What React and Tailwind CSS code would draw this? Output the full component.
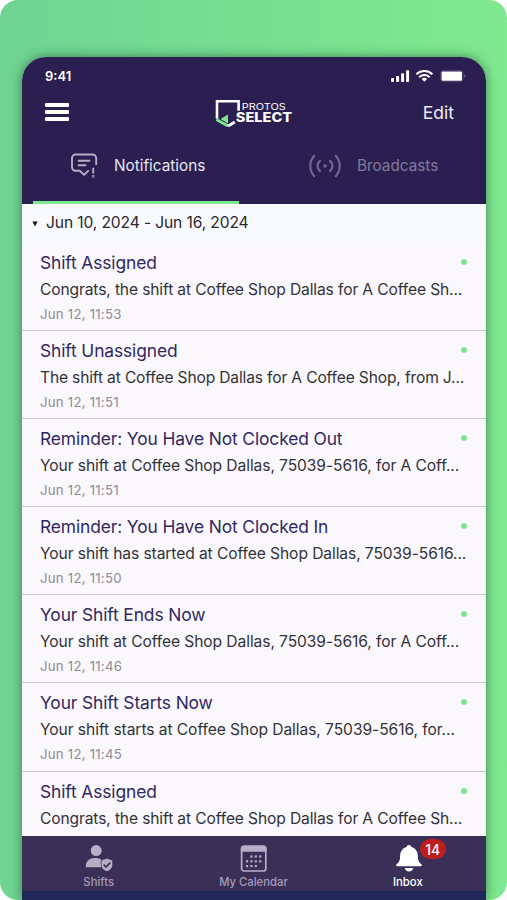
import React, { useState } from "react";

const NOTIFICATIONS = [
  { id: 1, title: "Shift Assigned", body: "Congrats, the shift at Coffee Shop Dallas for A Coffee Sh...", date: "Jun 12, 11:53", tracking: "tracking-[-0.13px]" },
  { id: 2, title: "Shift Unassigned", body: "The shift at Coffee Shop Dallas for A Coffee Shop, from J...", date: "Jun 12, 11:51", tracking: "tracking-[-0.16px]" },
  { id: 3, title: "Reminder: You Have Not Clocked Out", body: "Your shift at Coffee Shop Dallas, 75039-5616, for A Coff...", date: "Jun 12, 11:51", tracking: "tracking-[-0.09px]" },
  { id: 4, title: "Reminder: You Have Not Clocked In", body: "Your shift has started at Coffee Shop Dallas, 75039-5616...", date: "Jun 12, 11:50", tracking: "tracking-[-0.09px]" },
  { id: 5, title: "Your Shift Ends Now", body: "Your shift at Coffee Shop Dallas, 75039-5616, for A Coff...", date: "Jun 12, 11:46", tracking: "tracking-[-0.09px]" },
  { id: 6, title: "Your Shift Starts Now", body: "Your shift starts at Coffee Shop Dallas, 75039-5616, for...", date: "Jun 12, 11:45", tracking: "tracking-[-0.07px]" },
  { id: 7, title: "Shift Assigned", body: "Congrats, the shift at Coffee Shop Dallas for A Coffee Sh...", tracking: "tracking-[-0.13px]" },
];

function StatusBar() {
  return (
    <div className="flex h-[38px] items-center justify-between pl-[23px] pr-[20px]">
      <span className="text-[13px] font-semibold leading-none">9:41</span>
      <svg width="76" height="14" viewBox="0 0 76 14" fill="#fff">
        {/* Signal */}
        <rect x="1" y="9" width="3" height="4" rx="0.8" />
        <rect x="6.1" y="7" width="3" height="6" rx="0.8" />
        <rect x="11.1" y="4.3" width="3" height="8.7" rx="0.8" />
        <rect x="16.1" y="1.2" width="3" height="11.8" rx="0.8" />
        {/* Wifi */}
        <g fill="none" stroke="#fff" strokeWidth="2.1">
          <path d="M26.4 5.2a11.6 11.6 0 0 1 16 0" />
          <path d="M29.2 8.2a7.4 7.4 0 0 1 10.4 0" />
        </g>
        <path d="M34.4 12.8l-2.7-2.8a4.2 4.2 0 0 1 5.4 0z" />
        {/* Battery */}
        <rect x="50.600" y="1.3" width="22.600" height="11.4" rx="3" fill="none" stroke="#fff" strokeOpacity="0.2" strokeWidth="0.8" />
        <rect x="51.600" y="2.4" width="20.400" height="9.3" rx="1.2" />
        <path d="M74.5 5.3a2 2 0 0 1 0 3.4z" opacity="0.5" />
      </svg>
    </div>
  );
}

function Logo() {
  return (
    <svg width="78" height="30" viewBox="0 0 78 30" fill="none">
      <path d="M23.6 12.8V3.3H2v17.5" stroke="#fff" strokeWidth="2.6" />
      <path d="M13 16.6v8.8l-7.4-4.4z" fill="#7ee88f" />
      <path d="M1.4 21.6l11.6 6.4" stroke="#7ee88f" strokeWidth="2.8" />
      <path d="M13.2 28l6.6-4" stroke="#fff" strokeWidth="2.8" />
      <text x="26.8" y="11.8" fill="#fff" fontFamily="Inter, sans-serif" fontSize="9.2" textLength="44" lengthAdjust="spacingAndGlyphs">PROTOS</text>
      <text x="20.8" y="24" fill="#fff" fontFamily="Inter, sans-serif" fontSize="13" fontWeight="800" textLength="56.4" lengthAdjust="spacingAndGlyphs">SELECT</text>
    </svg>
  );
}

function MessageIcon() {
  return (
    <svg width="28" height="26" viewBox="0 0 28 26" fill="none" stroke="#b5aec6" strokeWidth="1.9" strokeLinecap="round" strokeLinejoin="round">
      <path d="M25.2 11.3V5.1A3.6 3.6 0 0 0 21.6 1.5H4.6A3.6 3.6 0 0 0 1 5.1v9.1a3.6 3.6 0 0 0 3.6 3.6h4.1l4.4 4.1 4.1-4.1" />
      <path d="M7.6 7.8h10.8M7.6 12.3h7M22.2 15.5v4.2" />
      <circle cx="22.2" cy="23.4" r="0.4" />
    </svg>
  );
}

function BroadcastIcon() {
  return (
    <svg width="32" height="24" viewBox="0 0 32 24" fill="none" stroke="#73698f" strokeWidth="2.1" strokeLinecap="round">
      <path d="M5.2 1.8c-5.2 6-5.2 14.4 0 20.4M26.8 1.8c5.2 6 5.2 14.4 0 20.4" />
      <path d="M11 6.9c-3.3 2.9-3.3 7.3 0 10.2M21 6.9c3.3 2.9 3.3 7.3 0 10.2" />
      <circle cx="16" cy="12" r="0.7" />
    </svg>
  );
}

function ShiftsIcon() {
  return (
    <svg width="28" height="28" viewBox="0 0 28 28" fill="#b5aec6">
      <circle cx="11.2" cy="6.6" r="5.5" />
      <path d="M.7 23.2c0-6.4 3.6-9.2 9.3-9.2 3 0 4.8.5 6.4 1.5-.9 1.4-1.2 4.2.2 7.7z" />
      <path d="M21.9 14.4l5.4 2v4.3c0 3.1-2 5.3-5.4 6.6-3.4-1.3-5.4-3.5-5.4-6.6v-4.3z" />
      <path d="M18.7 20.6l2.3 2.4 4.2-4.4" fill="none" stroke="#392f57" strokeWidth="1.7" />
    </svg>
  );
}

function CalendarIcon() {
  return (
    <svg width="28" height="28" viewBox="0 0 28 28" fill="#b5aec6">
      <rect x="2.6" y="2.4" width="24.2" height="24.6" rx="2.5" fill="none" stroke="#b5aec6" strokeWidth="1.7" />
      <path d="M1.8 7.8V4.6a3 3 0 0 1 3-3h19.800a3 3 0 0 1 3 3v3.200z" />
      {[12.4, 16.8, 21.2].map((x) => (
        <rect key={x} x={x - 1.1} y="11.4" width="2.2" height="2.2" />
      ))}
      {[8, 12.4, 16.8, 21.2].map((x) => (
        <rect key={x} x={x - 1.1} y="16.2" width="2.2" height="2.2" />
      ))}
      {[8, 12.4, 16.8].map((x) => (
        <rect key={x} x={x - 1.1} y="21" width="2.2" height="2.2" />
      ))}
    </svg>
  );
}

function BellIcon() {
  return (
    <svg width="28" height="28" viewBox="0 0 28 28" fill="#fff">
      <path d="M14 1c1.3 0 2.2.8 2.4 2 4.3 1.2 6.5 4.8 6.5 9.3 0 4.2 1 6 3.5 7.9.8.7.6 2.1-.7 2.1H2.3c-1.3 0-1.5-1.4-.7-2.1 2.5-1.9 3.5-3.7 3.5-7.9C5.1 7.8 7.3 4.2 11.6 3c.2-1.2 1.1-2 2.4-2z" />
      <path d="M9.8 24h8.4c-.3 2.2-1.9 3.5-4.2 3.5s-3.9-1.3-4.2-3.5z" />
    </svg>
  );
}

function NotificationRow({ item }) {
  return (
    <div className="h-[88.1px] shrink-0 border-b border-[#c9c6ce] pl-[18px] pr-[19px] pt-[8px]">
      <div className="flex items-center justify-between">
        <h2 className="text-[17.4px] leading-6 tracking-[-0.12px] text-[#322861]">{item.title}</h2>
        <span className="mb-[2px] h-[6px] w-[6px] rounded-full bg-[#7de58f]" />
      </div>
      <p className={`mt-[3px] whitespace-nowrap text-[15.6px] leading-6 text-[#333238] ${item.tracking}`}>{item.body}</p>
      {item.date && <p className="mt-[2px] text-[13.2px] leading-5 tracking-[0.24px] text-[#8d8b94]">{item.date}</p>}
    </div>
  );
}

export default function App() {
  const [tab, setTab] = useState("notifications");

  return (
    <div className="h-[900px] w-[507px] overflow-hidden bg-white font-['Inter',sans-serif]">
      <div className="h-full overflow-hidden rounded-[18px] bg-linear-to-r from-[#6fd492] to-[#80e98f] pl-[22px] pr-[21px] pt-[57px]">
        <div className="flex h-full flex-col overflow-hidden rounded-t-[24px] bg-[#faf8fd] shadow-[0_0_12px_rgba(20,70,40,0.6)]">
          {/* Header */}
          <header className="h-[147px] shrink-0 bg-[#2a1f50] text-white">
            <StatusBar />
            <div className="grid h-[36px] grid-cols-3 items-center pl-[23px] pr-[32px]">
              <button className="mb-[3px] flex w-6 flex-col gap-[3px]">
                <span className="h-[4px] w-6 rounded-[1px] bg-white" />
                <span className="h-[4px] w-6 rounded-[1px] bg-white" />
                <span className="h-[4px] w-6 rounded-[1px] bg-white" />
              </button>
              <div className="flex justify-center pl-[9px]">
                <Logo />
              </div>
              <button className="pt-px text-right text-[17.5px] text-[#efedf5]">Edit</button>
            </div>
            <div className="flex h-[73px] pl-[11px] pr-[11px]">
              <button
                onClick={() => setTab("notifications")}
                className={`flex w-[206px] items-center gap-[15px] pl-[38px] ${tab === "notifications" ? "border-b-[3px] border-[#7ee88f]" : ""}`}
              >
                <MessageIcon />
                <span className="text-[15.3px] text-[#e8e5f0]">Notifications</span>
              </button>
              <button
                onClick={() => setTab("broadcasts")}
                className="flex flex-1 items-center gap-[16px] pb-[3px] pl-[70px]"
              >
                <BroadcastIcon />
                <span className="text-[15.3px] text-[#82799c]">Broadcasts</span>
              </button>
            </div>
          </header>

          {/* Week group */}
          <div className="flex h-[39px] shrink-0 items-center bg-[#f9fafe] pb-[2px] pl-[10px] text-[15.6px] tracking-[-0.12px] text-[#29282e]">
            <svg className="mt-[2px]" width="6" height="6" viewBox="0 0 6 6"><path d="M.4.5h5.200L3 5.500z" fill="#111" /></svg>
            <span className="ml-[8px]">Jun 10, 2024 - Jun 16, 2024</span>
          </div>

          <main className="flex min-h-0 flex-1 flex-col overflow-hidden">
            {NOTIFICATIONS.map((item) => (
              <NotificationRow key={item.id} item={item} />
            ))}
          </main>

          {/* Bottom navigation */}
          <nav className="grid h-[64px] shrink-0 grid-cols-3 border-b-[9px] border-[#20285a] bg-[#392f57] pr-px pt-[8px] text-[11.3px] font-medium text-[#a39bb8]">
            <button className="flex flex-col items-center">
              <ShiftsIcon />
              <span className="pr-px leading-[21px]">Shifts</span>
            </button>
            <button className="flex flex-col items-center">
              <CalendarIcon />
              <span className="leading-[21px]">My Calendar</span>
            </button>
            <button className="flex flex-col items-center text-white">
              <span className="relative left-px">
                <BellIcon />
                <span className="absolute -top-[5px] left-[25px] flex h-[20px] w-[26px] items-center justify-center rounded-full bg-[#bd1d1f] text-[14px]">14</span>
              </span>
              <span className="leading-[21px]">Inbox</span>
            </button>
          </nav>
        </div>
      </div>
    </div>
  );
}
